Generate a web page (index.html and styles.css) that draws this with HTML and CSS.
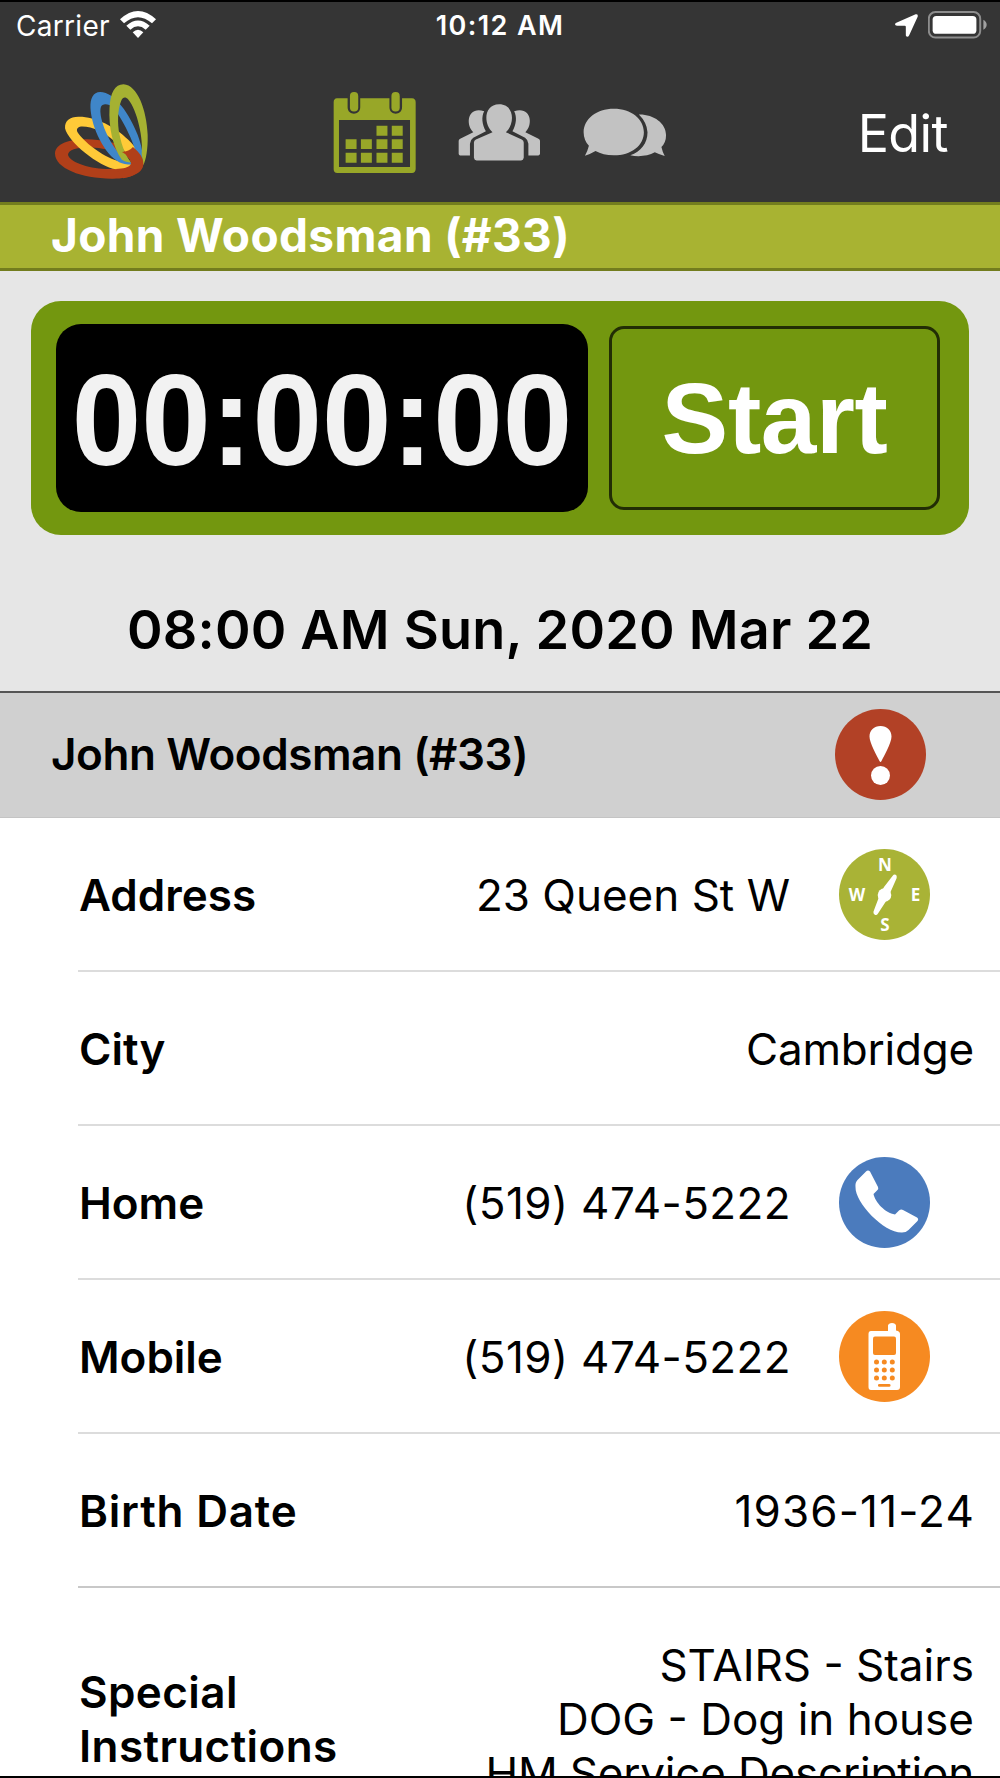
FILE: index.html
```html
<!DOCTYPE html>
<html lang="en">
<head>
    <meta charset="UTF-8">
    <meta name="viewport" content="width=device-width, initial-scale=1.0">
    <title>John Woodsman (#33)</title>
    <link rel="stylesheet" href="styles.css">
</head>
<body>
    <div class="app">
        <header class="topbar">
            <div class="status">
                <div class="status-left">
                    <span class="carrier">Carrier</span>
                    <svg class="wifi" viewBox="0 0 108 81">
                        <path d="M0 25 Q54 -25 108 25 L96 37 Q54 1 12 37Z"/>
                        <path d="M19 44 Q54 13 89 44 L77 56 Q54 36 31 56Z"/>
                        <path d="M38 64 Q54 49 70 64 L54 81Z"/>
                    </svg>
                </div>
                <span class="clock">10:12 AM</span>
                <div class="status-right">
                    <svg class="location" viewBox="0 0 68 68">
                        <path d="M61 1 Q69 0 67 8 L42 63 Q38 70 33 66 Q32 64 32 61 V38 Q32 35 29 35 H6 Q0 34 0 30 Q1 27 4 26Z"/>
                    </svg>
                    <svg class="battery" viewBox="0 0 178 83">
                        <rect x="2.5" y="2.5" width="155" height="77" rx="20" fill="none" stroke="#8d8d8d" stroke-width="6"/>
                        <rect x="14" y="14" width="132" height="54" rx="11" fill="#fff"/>
                        <path d="M167 26 Q177 32 177 41 Q177 50 167 56Z" fill="#a0a0a0"/>
                    </svg>
                </div>
            </div>
            <nav class="nav">
                <svg class="logo" viewBox="160 250 290 290">
                    <path class="red" fill-rule="evenodd" d="M166 461C167 430 210 418 262 418C345 420 424 450 430 490C432 520 390 537 335 536C245 536 166 505 166 461ZM205 464C206 484 262 506 318 507C365 508 396 500 394 487C390 464 320 443 265 442C230 443 206 450 205 464Z"/>
                    <path class="yellow" fill-rule="evenodd" d="M236 351C285 350 345 380 385 420C410 445 424 465 424 478C424 498 385 510 350 508C295 500 205 425 196 385C195 362 210 352 236 351ZM248 380C236 380 230 385 232 394C242 415 295 462 345 480C370 488 386 491 394 490C398 470 340 415 300 393C280 384 262 380 248 380Z"/>
                    <path class="blue" fill-rule="evenodd" d="M301 277C345 277 390 345 413 405C426 440 430 465 428 484C415 496 380 497 358 487C315 465 275 385 272 325C271 295 280 278 301 277ZM313 314C303 315 301 325 302 340C305 380 340 455 384 485C402 492 412 480 409 465C404 430 365 352 340 324C330 315 322 313 313 314Z"/>
                    <path class="green" fill-rule="evenodd" d="M371 254C412 256 440 330 443 405C444 450 438 480 430 496L425 462C431 420 412 330 385 299C376 290 369 292 364 303C353 330 352 370 359 405C366 440 378 470 394 488C384 488 372 485 365 479C338 440 326 380 329 325C331 280 345 254 371 254Z"/>
                    <path class="red" d="M399 441C420 458 431 475 430 492C428 514 400 530 370 535L348 507C370 506 388 502 393 492C396 480 380 462 366 456C380 455 392 450 399 441Z"/>
                </svg>
                <div class="tabs">
                    <svg class="tab-icon calendar" viewBox="40 64 250 248">
                        <path fill-rule="evenodd" d="M52 85H84V112C84 138 122 138 122 112V85H210V112C210 138 248 138 248 112V85H278Q289 86 289 97V299Q288 310 278 310H53Q42 310 42 299V97Q42 86 52 85ZM58 150V292H272V150Z"/>
                        <rect x="91" y="66" width="25" height="59" rx="12"/>
                        <rect x="216" y="66" width="25" height="59" rx="12"/>
                        <path d="M171 168h33v30h-33zM217 168h33v30h-33zM78 208h33v30h-33zM124 208h33v30h-33zM171 208h33v30h-33zM217 208h33v30h-33zM78 249h33v30h-33zM124 249h33v30h-33zM171 249h33v30h-33zM217 249h33v30h-33z"/>
                    </svg>
                    <svg class="tab-icon people" viewBox="414 100 250 176">
                        <path d="M518 187C491 165 490 103 538 103C586 103 585 165 558 187L606 209Q612 212 612 218V264Q611 272 604 272H470Q463 272 462 264V218Q462 212 468 209Z"/>
                        <path d="M493 124C484 140 486 164 498 184L460 204Q451 210 450 222V257H420Q416 256 416 252V213Q416 208 422 206L460 187C436 165 442 108 493 124Z"/>
                        <path d="M583 124C592 140 590 164 578 184L616 204Q625 210 626 222V257H656Q661 256 661 252V213Q661 208 655 206L617 187C641 165 635 108 583 124Z"/>
                    </svg>
                    <svg class="tab-icon chat" viewBox="790 114 252 148">
                        <path d="M882 116C935 116 973 147 973 187C973 227 935 257 882 257C860 257 842 252 827 244Q812 253 795 258Q803 244 807 228C797 217 791 203 791 187C791 147 830 116 882 116Z"/>
                        <path d="M958 134C1002 133 1040 160 1040 196Q1040 217 1026 232Q1029 246 1036 259Q1020 255 1006 248C985 260 955 262 932 257C964 246 984 220 984 187Q982 158 958 134Z"/>
                    </svg>
                </div>
                <a class="edit">Edit</a>
            </nav>
        </header>

        <div class="client-bar">John Woodsman (#33)</div>

        <section class="visit">
            <div class="timer">
                <div class="timer-display"><span class="digits">00:00:00</span></div>
                <button class="start">Start</button>
            </div>
            <div class="visit-time">08:00 AM Sun, 2020 Mar 22</div>
        </section>

        <div class="section-head">
            <span class="section-name">John Woodsman (#33)</span>
            <svg class="badge" viewBox="0 0 91 91">
                <circle cx="45.5" cy="45.5" r="45.5" fill="#b24126"/>
                <path d="M45.5 17C52 17 56.5 21.5 56.5 27.5C56.5 34 49 47 46.5 52Q45.500 54 44.5 52C42 47 34.5 34 34.5 27.5C34.5 21.5 39 17 45.5 17Z" fill="#fff"/>
                <circle cx="45.5" cy="66.5" r="9.5" fill="#fff"/>
            </svg>
        </div>

        <div class="rows">
            <div class="row">
                <span class="label">Address</span>
                <span class="value">23 Queen St W</span>
                <svg class="row-icon" viewBox="0 0 91 91">
                    <circle cx="45.5" cy="45.5" r="45.5" fill="#a9b336"/>
                    <g class="compass-letters">
                        <text x="46" y="22">N</text>
                        <text x="18" y="52">W</text>
                        <text x="76.5" y="52">E</text>
                        <text x="46" y="82">S</text>
                    </g>
                    <g fill="#fff">
                        <path d="M53.5 27Q55.5 24.5 57.5 26.5Q58 28 57.5 29.5L51.5 43L46.5 53L39 64.5Q37.5 67 35.5 65.5Q34 64.5 34.5 62.5L40 48L45 38Z"/>
                        <circle cx="45.5" cy="46" r="6.8"/>
                    </g>
                </svg>
            </div>
            <div class="row">
                <span class="label">City</span>
                <span class="value city">Cambridge</span>
            </div>
            <div class="row">
                <span class="label">Home</span>
                <span class="value phone">(519) 474-5222</span>
                <svg class="row-icon" viewBox="0 0 91 91">
                    <circle cx="45.5" cy="45.5" r="45.5" fill="#4b7bbd"/>
                    <path d="M27 14.5Q29 12.5 31 14.5L39 30Q40 32 38 33.5L34.5 37C36 45 46 56 56 57.5L60 53.5Q62 52 64 53L78 60.5Q80 62 78.5 64L69.5 73Q67 75.5 63 75.5C45 76 16 46 16.5 30Q16 25.5 18.5 23Z" fill="#fff"/>
                </svg>
            </div>
            <div class="row">
                <span class="label">Mobile</span>
                <span class="value phone">(519) 474-5222</span>
                <svg class="row-icon" viewBox="0 0 91 91">
                    <circle cx="45.5" cy="45.5" r="45.5" fill="#f68a21"/>
                    <path d="M32 20H49V14.5Q49.5 12 53 12Q56.5 12 57 14.5V19.5Q61 20 61 23V76Q61 79 58 79H32Q29.5 79 29.5 76V23Q29.5 20 32 20Z" fill="#fff"/>
                    <rect x="34" y="25.5" width="23" height="18.5" rx="2" fill="#f68a21"/>
                    <g fill="#f68a21">
                        <circle cx="37.5" cy="51" r="2.5"/><circle cx="45.3" cy="51" r="2.5"/><circle cx="53.3" cy="51" r="2.5"/>
                        <circle cx="37.5" cy="59" r="2.5"/><circle cx="45.3" cy="59" r="2.5"/><circle cx="53.3" cy="59" r="2.5"/>
                        <circle cx="37.5" cy="67" r="2.5"/><circle cx="45.3" cy="67" r="2.5"/><circle cx="53.3" cy="67" r="2.5"/>
                        <rect x="39" y="73" width="12.5" height="2.7" rx="1.3"/>
                    </g>
                </svg>
            </div>
            <div class="row row-dark">
                <span class="label birth">Birth Date</span>
                <span class="value date">1936-11-24</span>
            </div>
            <div class="row row-notes">
                <span class="label notes-label">Special<br>Instructions</span>
                <span class="value notes">STAIRS - Stairs<br>DOG - Dog in house<br><span class="service">HM Service Description</span></span>
            </div>
        </div>
    </div>
</body>
</html>
```
FILE: styles.css
```css
* {
    box-sizing: border-box;
}
body {
    margin: 0;
    font-family: Inter, 'Liberation Sans', sans-serif;
    color: #000;
    background: #fff;
}
svg {
    display: block;
    flex-shrink: 0;
}
.app {
    width: 1000px;
    height: 1778px;
    display: flex;
    flex-direction: column;
    overflow: hidden;
    border-top: 2px solid #000;
    border-bottom: 2px solid #000;
}

/* header */
.topbar {
    height: 200px;
    flex-shrink: 0;
    background: #353535;
    color: #fff;
}
.status {
    height: 46px;
    display: grid;
    grid-template-columns: 1fr auto 1fr;
    align-items: center;
    padding: 0 13px 0 16px;
    font-size: 28px;
}
.status-left,
.status-right {
    display: flex;
    align-items: center;
}
.status-left {
    gap: 10px;
}
.status-right {
    justify-content: flex-end;
    gap: 10px;
}
.carrier {
    padding-top: 1px;
    letter-spacing: 0.3px;
}
.clock {
    margin-left: -3px;
    padding-top: 1px;
    font-weight: 600;
    font-size: 27px;
    letter-spacing: 1.4px;
}
.wifi {
    width: 36px;
    height: 27px;
    margin-top: -1px;
    fill: #fff;
}
.location {
    width: 23px;
    height: 23px;
    fill: #fff;
}
.battery {
    width: 59px;
    height: 28px;
}
.nav {
    height: 153px;
    display: grid;
    grid-template-columns: 1fr auto 1fr;
    align-items: center;
    padding: 0 52px 0 53px;
}
.logo {
    width: 97px;
    height: 97px;
    margin-top: 13px;
}
.logo .red { fill: #b13f19; }
.logo .yellow { fill: #ffca38; }
.logo .blue { fill: #3f86c9; }
.logo .green { fill: #a5b132; }
.tabs {
    display: flex;
    align-items: center;
    gap: 42px;
    margin: 16px 2px 0 0;
}
.tab-icon {
    fill: #c2c2c2;
}
.calendar {
    width: 83px;
    height: 83px;
    fill: #98a728;
}
.people {
    width: 83px;
    height: 59px;
}
.chat {
    width: 84px;
    height: 49px;
}
.edit {
    justify-self: end;
    margin-top: 17px;
    font-size: 52px;
    letter-spacing: -0.6px;
}

.client-bar {
    height: 69px;
    flex-shrink: 0;
    display: flex;
    align-items: center;
    padding: 0 0 4px 51px;
    background: #a8b332;
    border-top: 3px solid #737d1e;
    border-bottom: 3px solid #737d1e;
    color: #fff;
    font-size: 46px;
    font-weight: 700;
    letter-spacing: 0.36px;
}

/* timer */
.visit {
    height: 422px;
    flex-shrink: 0;
    padding: 30px 31px 0;
    background: #e6e6e6;
    border-bottom: 2px solid #555;
}
.timer {
    height: 234px;
    display: flex;
    align-items: center;
    gap: 21px;
    padding: 0 29px 0 25px;
    background: #73970f;
    border-radius: 30px;
}
.timer-display {
    width: 532px;
    height: 188px;
    display: flex;
    align-items: center;
    justify-content: center;
    border-radius: 25px;
    background: #000;
    color: #f2f2f2;
    font: bold 125px 'Liberation Sans', sans-serif;
}
.digits {
    display: block;
    padding-top: 2px;
    transform: scaleY(1.04);
}
.start {
    flex: 1;
    height: 184px;
    padding: 0;
    border: 3px solid #222d05;
    border-radius: 15px;
    background: none;
    color: #fff;
    font: bold 100px 'Liberation Sans', sans-serif;
    letter-spacing: -0.4px;
}
.visit-time {
    margin-top: 63px;
    line-height: 64px;
    text-align: center;
    font-size: 54px;
    font-weight: 600;
    letter-spacing: 0.2px;
}

.section-head {
    height: 125px;
    flex-shrink: 0;
    display: flex;
    align-items: center;
    justify-content: space-between;
    padding: 0 74px 2px 51px;
    background: #d0d0d0;
    border-bottom: 1px solid #c4c4c4;
    font-size: 44px;
    font-weight: 600;
    letter-spacing: -0.42px;
}
.badge,
.row-icon {
    width: 91px;
    height: 91px;
}

/* detail rows */
.rows {
    padding-left: 78px;
}
.row {
    height: 154px;
    display: flex;
    align-items: center;
    padding: 0 26px 0 1px;
    border-bottom: 2px solid #dcdcdc;
    font-size: 44px;
}
.row-dark {
    border-bottom-color: #c8c8c8;
}
.label {
    font-weight: 600;
    padding-top: 2px;
}
.value {
    margin-left: auto;
    padding-top: 2px;
    text-align: right;
}
.city {
    letter-spacing: -0.2px;
}
.phone {
    margin-right: -1px;
    letter-spacing: 0.4px;
}
.birth {
    letter-spacing: 0.8px;
}
.date {
    margin-right: -1px;
    letter-spacing: 1.15px;
}
.notes-label {
    letter-spacing: 0.4px;
}
.service {
    letter-spacing: -0.18px;
}
.row-icon {
    margin: 0 44px 0 49px;
}
.row-notes {
    height: 260px;
    border-bottom: none;
    line-height: 54px;
}
.compass-letters {
    fill: #fff;
    font: bold 17px 'Open Sans', sans-serif;
    text-anchor: middle;
}
```
